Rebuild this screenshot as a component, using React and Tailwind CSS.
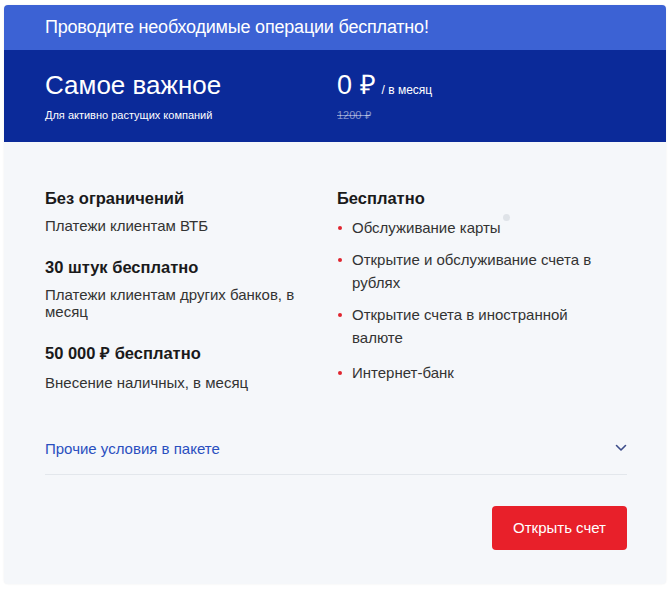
import React from "react";

const sans = { fontFamily: '"Liberation Sans", Arial, sans-serif' };

const limits = [
  { title: "Без ограничений", text: "Платежи клиентам ВТБ", gap: "mt-[9px]" },
  { title: "30 штук бесплатно", text: "Платежи клиентам других банков, в месяц", gap: "mt-[9px]" },
  { title: "50 000 ₽ бесплатно", text: "Внесение наличных, в месяц", gap: "mt-[11px]" },
];

const free = [
  "Обслуживание карты",
  "Открытие и обслуживание счета в рублях",
  "Открытие счета в иностранной валюте",
  "Интернет-банк",
];

export default function App() {
  return (
    <div className="w-[670px] h-[589px] bg-white pt-[5px] px-[4px]" style={sans}>
      <div className="w-[662px] h-[579px] rounded-[4px] overflow-hidden bg-[#f5f7fa] shadow-[0_0_2px_rgba(0,0,0,0.08)] flex flex-col">
        {/* promo strip */}
        <div className="h-[45px] bg-[#3c62d4] px-[41px] flex items-center">
          <span className="text-white text-[18px] tracking-[-0.2px]">Проводите необходимые операции бесплатно!</span>
        </div>

        {/* tariff header */}
        <div className="h-[92px] bg-[#0b2a99] px-[41px] pt-[19px] flex">
          <div className="w-[292px]">
            <div className="text-white text-[26px] leading-[32px]">Самое важное</div>
            <div className="text-white text-[11px] mt-[6px]">Для активно растущих компаний</div>
          </div>
          <div>
            <div className="flex items-baseline text-white">
              <span className="text-[27px] leading-[32px]">0 ₽</span>
              <span className="text-[12px] ml-[6px]">/ в месяц</span>
            </div>
            <div className="text-[11px] mt-[6px] text-white/50 line-through">1200 ₽</div>
          </div>
        </div>

        {/* conditions */}
        <div className="pl-[41px] pr-[39px] pt-[46px] flex">
          <div className="w-[292px] flex flex-col gap-[23px]">
            {limits.map((l) => (
              <div key={l.title}>
                <div className="text-[16.5px] font-bold leading-[20px] text-[#1a1a1a]">{l.title}</div>
                <div className={`text-[15px] leading-[17px] ${l.gap} text-[#333] w-[262px]`}>{l.text}</div>
              </div>
            ))}
          </div>
          <div className="w-[270px]">
            <div className="text-[16.5px] font-bold leading-[20px] text-[#1a1a1a]">Бесплатно</div>
            <ul className="mt-[8px] flex flex-col gap-[9px]">
              {free.map((f, i) => (
                <li key={f} className={`relative pl-[15px] w-[265px] text-[15px] leading-[23px] text-[#333] ${i === 3 ? "mt-[3px]" : ""}`}>
                  <span className="absolute left-[1px] top-[10px] w-[4px] h-[4px] rounded-full bg-[#e0252f]" />
                  {f}
                  {i === 0 && (
                    <span className="absolute left-[166px] top-[-2px] w-[7px] h-[7px] rounded-full bg-[#dfe3e8]" />
                  )}
                </li>
              ))}
            </ul>
          </div>
        </div>

        {/* more */}
        <div className="ml-[41px] mr-[39px] mt-[45px] h-[39px] border-b border-[#e3e7ec] flex items-start justify-between pt-[2px]">
          <span className="text-[15px] text-[#2a4fbf]">Прочие условия в пакете</span>
          <svg width="12" height="8" viewBox="0 0 12 8" className="mt-[6px]" fill="none">
            <path d="M1.5 1.5 L6 6 L10.5 1.5" stroke="#3d4d8a" strokeWidth="1.6" strokeLinecap="round" strokeLinejoin="round" />
          </svg>
        </div>

        <div className="ml-[41px] mr-[39px] mt-[31px] flex justify-end">
          <button className="w-[135px] h-[44px] rounded-[4px] bg-[#e8202a] text-white text-[15px]">
            Открыть счет
          </button>
        </div>
      </div>
    </div>
  );
}
